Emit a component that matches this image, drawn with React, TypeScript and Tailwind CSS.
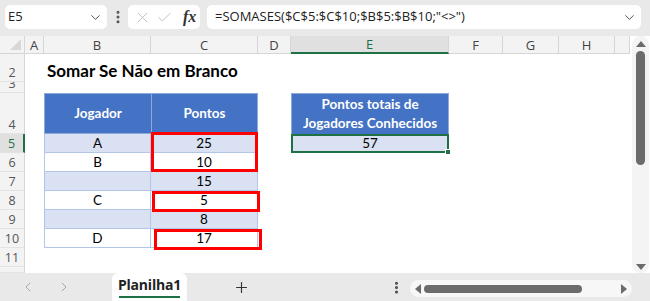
import { ChevronDown, EllipsisVertical, X, Check, ChevronLeft, ChevronRight, Plus } from "lucide-react";

const ui = "font-['Open_Sans',sans-serif]";
const cell = "font-['Lato','Liberation_Sans',sans-serif]";

const colLabels = ["A", "B", "C", "D", "E", "F", "G", "H", ""];

const body = [
  { r: 5, b: "A", c: "25", band: true },
  { r: 6, b: "B", c: "10", band: false },
  { r: 7, b: "", c: "15", band: true },
  { r: 8, b: "C", c: "5", band: false },
  { r: 9, b: "", c: "8", band: true },
  { r: 10, b: "D", c: "17", band: false },
];

function RowHead({ n, active }: { n: number | string; active?: boolean }) {
  return (
    <div
      className={`flex items-end justify-center overflow-hidden text-[12.5px] leading-[17px] ${ui} ${
        active
          ? "bg-[#e0e0e0] text-[#1e7145] border-r-2 border-[#1e7145]"
          : "bg-[#f3f3f3] text-[#555] border-r border-[#d6d6d6]"
      } border-b border-b-[#e3e3e3]`}
    >
      {n}
    </div>
  );
}

const Empty = () => <div className="bg-white" />;

export default function App() {
  return (
    <div className={`w-[650px] h-[301px] bg-[#e9e9e9] flex flex-col overflow-hidden ${ui}`}>
      {/* formula bar */}
      <div className="h-[36px] flex items-start pt-[5px] pl-[5px] pr-[9px] text-[13px] text-[#222]">
        <div className="w-[102px] h-[24px] bg-white rounded-[5px] flex items-center justify-between pl-[3px] pr-[4px]">
          <span>E5</span>
          <ChevronDown size={15} strokeWidth={1.5} className="text-[#444]" />
        </div>
        <div className="w-[21px] h-[24px] flex items-center justify-center">
          <EllipsisVertical size={16} strokeWidth={2.5} className="text-[#555]" />
        </div>
        <div className="w-[72px] h-[24px] bg-white rounded-[5px] flex items-center pl-[6px] gap-[5px]">
          <X size={17} strokeWidth={1.2} className="text-[#b5b5b5]" />
          <Check size={17} strokeWidth={1.2} className="text-[#b5b5b5]" />
          <span className="ml-[5px] font-['Liberation_Serif',serif] italic font-bold text-[16px] text-[#333] leading-none">
            fx
          </span>
        </div>
        <div className="ml-[7px] flex-1 h-[24px] bg-white rounded-[5px] flex items-center justify-between pl-[8px] pr-[4px]">
          <span>=SOMASES($C$5:$C$10;$B$5:$B$10;"&lt;&gt;")</span>
          <ChevronDown size={15} strokeWidth={1.5} className="text-[#444]" />
        </div>
      </div>

      {/* sheet + vertical scrollbar */}
      <div className="flex-1 flex min-h-0">
        <div className="relative flex-1 grid grid-cols-[25px_19px_107px_107px_33px_158px_54px_56px_56px_1fr] grid-rows-[18px_28px_11px_41px_19px_19px_19px_19px_19px_19px_19px_1fr] bg-white overflow-hidden">
          {/* column headers */}
          <div className="bg-[#f3f3f3] border-r border-b border-[#d6d6d6] flex items-end justify-end p-[3px]">
            <div className="w-0 h-0 border-l-[11px] border-l-transparent border-b-[11px] border-b-[#d8d8d8]" />
          </div>
          {colLabels.map((c, i) =>
            c === "E" ? (
              <div
                key={i}
                className="bg-[#e0e0e0] text-[#1e7145] border-b-2 border-[#1e7145] border-r border-r-[#d6d6d6] flex items-center justify-center text-[13px] leading-[16px]"
              >
                {c}
              </div>
            ) : (
              <div
                key={i}
                className="bg-[#f3f3f3] text-[#444] border-b border-r border-[#d6d6d6] flex items-center justify-center text-[13px] leading-[16px]"
              >
                {c}
              </div>
            )
          )}

          {/* row 2: title */}
          <RowHead n={2} />
          <Empty />
          <div className="bg-white flex items-end pl-[3px] overflow-visible whitespace-nowrap z-10">
            <span className={`${cell} font-bold text-[17px] leading-[22px] text-black`}>Somar Se Não em Branco</span>
          </div>
          {Array.from({ length: 7 }).map((_, i) => (
            <Empty key={i} />
          ))}

          {/* row 3 */}
          <RowHead n={3} />
          {Array.from({ length: 9 }).map((_, i) => (
            <Empty key={i} />
          ))}

          {/* row 4: headers */}
          <RowHead n={4} />
          <Empty />
          <div className={`bg-[#4472c4] border border-r-0 border-[#8eaadb] flex items-center justify-center text-white font-bold text-[13.5px] ${cell}`}>
            Jogador
          </div>
          <div className={`bg-[#4472c4] border border-[#8eaadb] flex items-center justify-center text-white font-bold text-[13.5px] ${cell}`}>
            Pontos
          </div>
          <Empty />
          <div className={`bg-[#4472c4] border border-b-0 border-[#8eaadb] flex items-center justify-center text-center text-white font-bold text-[13.5px] leading-[19px] ${cell}`}>
            Pontos totais de
            <br />
            Jogadores Conhecidos
          </div>
          {Array.from({ length: 4 }).map((_, i) => (
            <Empty key={i} />
          ))}

          {/* rows 5-10 */}
          {body.map((row) => {
            const bg = row.band ? "bg-[#d9e1f2]" : "bg-white";
            return [
              <RowHead key={`h${row.r}`} n={row.r} active={row.r === 5} />,
              <Empty key={`a${row.r}`} />,
              <div
                key={`b${row.r}`}
                className={`${bg} border-l border-b border-r border-[#b4c6e7] flex items-center justify-center text-[13.5px] text-black ${cell}`}
              >
                {row.b}
              </div>,
              <div
                key={`c${row.r}`}
                className={`${bg} border-b border-r border-[#b4c6e7] flex items-center justify-center text-[13.5px] text-black ${cell}`}
              >
                {row.c}
              </div>,
              <Empty key={`d${row.r}`} />,
              row.r === 5 ? (
                <div
                  key="e5"
                  className={`relative bg-[#d9e1f2] border-2 border-[#1e7145] flex items-center justify-center text-[13.5px] text-black ${cell}`}
                >
                  57
                  <div className="absolute -right-[4px] -bottom-[4px] w-[6px] h-[6px] bg-[#1e7145] border border-white" />
                </div>
              ) : (
                <Empty key={`e${row.r}`} />
              ),
              <Empty key={`f${row.r}`} />,
              <Empty key={`g${row.r}`} />,
              <Empty key={`hh${row.r}`} />,
              <Empty key={`i${row.r}`} />,
            ];
          })}

          {/* row 11 */}
          <RowHead n={11} />
          {Array.from({ length: 9 }).map((_, i) => (
            <Empty key={i} />
          ))}
          {/* row 12 (cut) */}
          <RowHead n="" />
          {Array.from({ length: 9 }).map((_, i) => (
            <Empty key={i} />
          ))}

          {/* red highlight boxes */}
          <div className="absolute left-[151px] top-[96px] w-[107px] h-[40px] border-[3px] border-[#ff0000]" />
          <div className="absolute left-[152px] top-[155px] w-[108px] h-[21px] border-[3px] border-[#ff0000]" />
          <div className="absolute left-[154px] top-[193px] w-[108px] h-[21px] border-[3px] border-[#ff0000]" />
        </div>

        {/* vertical scrollbar */}
        <div className="w-[20px] bg-white flex pl-[2px] pr-[1px]">
          <div className="flex-1 bg-[#f4f4f4] rounded-full flex flex-col items-center pt-[5px] pb-[3px]">
            <div className="w-0 h-0 border-l-[5px] border-r-[5px] border-b-[6px] border-l-transparent border-r-transparent border-b-[#6b6b6b]" />
            <div className="mt-[4px] w-[9px] h-[114px] rounded-full bg-[#6b6b6b]" />
            <div className="flex-1" />
            <div className="w-0 h-0 border-l-[5px] border-r-[5px] border-t-[6px] border-l-transparent border-r-transparent border-t-[#6b6b6b]" />
          </div>
        </div>
      </div>

      {/* sheet tabs bar */}
      <div className="h-[28px] flex items-stretch bg-[#e9e9e9]">
        <div className="w-[110px] flex items-center gap-[20px] pl-[20px] text-[#a8a8a8]">
          <ChevronLeft size={16} strokeWidth={1.5} />
          <ChevronRight size={16} strokeWidth={1.5} />
        </div>
        <div className="ml-[2px] w-[75px] bg-white rounded-t-[6px] flex flex-col items-center justify-center">
          <span className="font-bold text-[14px] leading-[18px] text-[#222] tracking-[-0.2px]">Planilha1</span>
          <div className="mt-[2px] w-[61px] h-[2px] bg-[#1e7145]" />
        </div>
        <div className="w-[108px] flex items-center justify-center text-[#333]">
          <Plus size={17} strokeWidth={1.6} />
        </div>
        <div className="flex-1" />
        <div className="w-[28px] flex items-center justify-center">
          <EllipsisVertical size={15} strokeWidth={2.8} className="text-[#444]" />
        </div>
        <div className="w-[222px] my-[7px] mb-[4px] bg-[#f7f7f7] rounded-full flex items-center px-[5px] gap-[3px]">
          <div className="w-0 h-0 border-t-[5px] border-b-[5px] border-r-[6px] border-t-transparent border-b-transparent border-r-[#6b6b6b]" />
          <div className="w-[158px] h-[8px] rounded-full bg-[#6b6b6b]" />
          <div className="flex-1" />
          <div className="w-0 h-0 border-t-[5px] border-b-[5px] border-l-[6px] border-t-transparent border-b-transparent border-l-[#6b6b6b]" />
        </div>
        <div className="w-[18px]" />
      </div>
    </div>
  );
}
